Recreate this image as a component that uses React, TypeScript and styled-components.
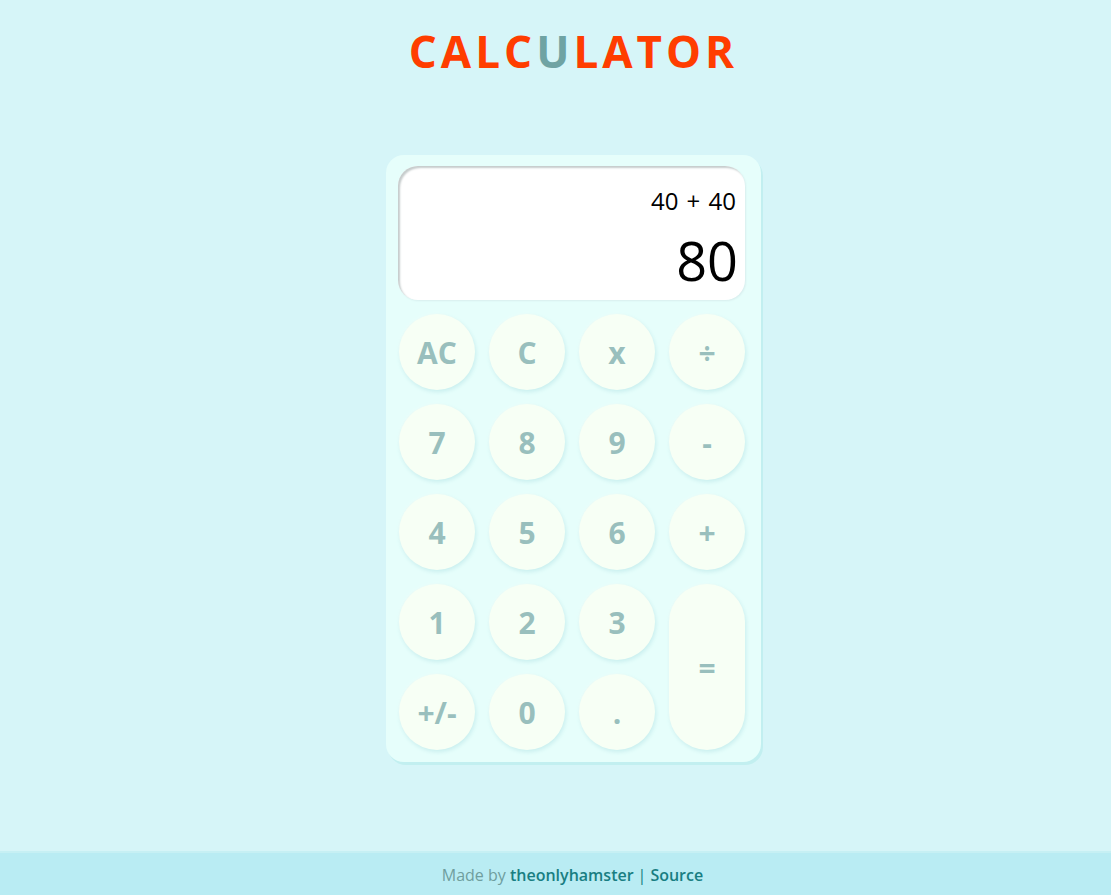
import React from "react";
import styled, { createGlobalStyle } from "styled-components";

const Global = createGlobalStyle`
  html, body { margin: 0; padding: 0; }
  body {
    background: #d6f5f8;
    font-family: "Open Sans", "Noto Sans", sans-serif;
    min-height: 895px;
  }
`;

const Page = styled.div`
  min-height: 895px;
  display: flex;
  flex-direction: column;
  align-items: center;
`;

const Main = styled.main`
  display: flex;
  flex-direction: column;
  align-items: center;
  padding-left: 36px;
`;

const Title = styled.h1`
  margin: 23px 0 0;
  font-size: 44px;
  font-weight: 700;
  letter-spacing: 4px;
  color: #ff3d00;
  line-height: 56px;
`;

const Accent = styled.span`
  color: #6fa3a3;
`;

const Card = styled.div`
  margin-top: 76px;
  width: 347px;
  padding: 11px 16px 12px 12px;
  background: #e6fefb;
  border-radius: 18px;
  box-shadow: 2px 3px 0 #c2eff0;
  display: flex;
  flex-direction: column;
  gap: 14px;
`;

const Display = styled.div`
  height: 134px;
  box-sizing: border-box;
  background: #fff;
  border-radius: 20px;
  box-shadow: inset 2px 2px 2px #c6cccc, 1px 1px 2px #d8eeee;
  display: flex;
  flex-direction: column;
  align-items: flex-end;
  padding: 19px 9px 0 10px;
  color: #000;
`;

const Expr = styled.div`
  font-size: 24px;
  line-height: 32px;
  word-spacing: 2px;
`;

const Result = styled.div`
  font-size: 54px;
  line-height: 66px;
  margin-top: 10px;
  margin-right: -2px;
`;

const Grid = styled.div`
  display: grid;
  grid-template-columns: repeat(4, 76px);
  grid-auto-rows: 76px;
  gap: 14px;
  padding-left: 1px;
`;

const Key = styled.button<{ $tall?: boolean }>`
  border: none;
  margin: 0;
  padding: 0;
  background: #f7fff5;
  border-radius: 38px;
  box-shadow: 1px 2px 4px #c8eeee, -1px -1px 2px #eefefb;
  color: #99bfbd;
  font-family: "Open Sans", "Noto Sans", sans-serif;
  font-weight: 700;
  font-size: 30px;
  display: flex;
  align-items: center;
  justify-content: center;
  grid-row: ${(p) => (p.$tall ? "span 2" : "auto")};
  grid-column: ${(p) => (p.$tall ? "4" : "auto")};
  cursor: pointer;
`;

const Footer = styled.footer`
  margin-top: auto;
  width: 100%;
  height: 44px;
  background: #b9ecf3;
  border-top: 2px solid #c6f0f4;
  box-sizing: border-box;
  display: flex;
  align-items: center;
  justify-content: center;
  font-size: 16px;
  color: #6f9e9e;
  padding: 1px 0 0 34px;
`;

const Link = styled.a`
  color: #187e82;
  font-weight: 600;
  text-decoration: none;
`;

const Sep = styled.span`
  color: #187e82;
  margin: 0 4px;
`;

export default function App() {
  const keys: { label: string; tall?: boolean }[] = [
    { label: "AC" }, { label: "C" }, { label: "x" }, { label: "÷" },
    { label: "7" }, { label: "8" }, { label: "9" }, { label: "-" },
    { label: "4" }, { label: "5" }, { label: "6" }, { label: "+" },
    { label: "1" }, { label: "2" }, { label: "3" }, { label: "=", tall: true },
    { label: "+/-" }, { label: "0" }, { label: "." },
  ];
  return (
    <Page>
      <Global />
      <Main>
        <Title>
          CALC<Accent>U</Accent>LATOR
        </Title>
        <Card>
          <Display>
            <Expr>40 + 40</Expr>
            <Result>80</Result>
          </Display>
          <Grid>
            {keys.map((k) => (
              <Key key={k.label} $tall={k.tall}>
                {k.label}
              </Key>
            ))}
          </Grid>
        </Card>
      </Main>
      <Footer>
        Made by&nbsp;<Link href="#">theonlyhamster</Link>
        <Sep>|</Sep>
        <Link href="#">Source</Link>
      </Footer>
    </Page>
  );
}
